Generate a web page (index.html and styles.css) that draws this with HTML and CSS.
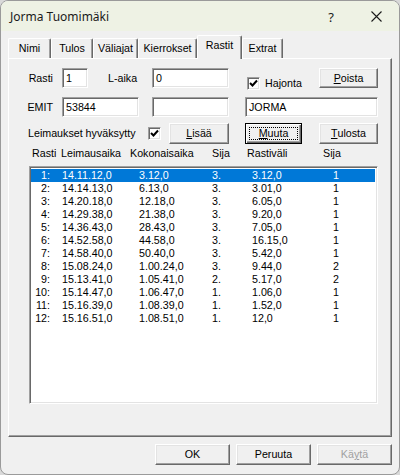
FILE: index.html
```html
<!DOCTYPE html>
<html>
<head>
<meta charset="utf-8">
<link rel="stylesheet" href="styles.css">
</head>
<body>
<div class="window">
  <div class="titlebar">
    <span class="title">Jorma Tuomimäki</span>
    <span class="help">?</span>
    <span class="close"><svg width="11" height="11" viewBox="0 0 11 11"><path d="M0.5 0.5 L10.5 10.5 M10.5 0.5 L0.5 10.5" stroke="#1a1a1a" stroke-width="1.1" fill="none"/></svg></span>
  </div>
  <div class="client">
    <div class="tabs">
      <div class="tab w-nimi">Nimi</div>
      <div class="tab w-tulos">Tulos</div>
      <div class="tab w-vali">Väliajat</div>
      <div class="tab w-kierr">Kierrokset</div>
      <div class="tab active w-rastit">Rastit</div>
      <div class="tab w-extrat">Extrat</div>
    </div>
    <div class="panel">
      <div class="row row1">
        <span class="lbl lbl-right">Rasti</span>
        <span class="input in-rasti">1</span>
        <span class="lbl lbl-laika">L-aika</span>
        <span class="input in-77">0</span>
        <span class="chkgroup">
          <span class="check"><svg width="9" height="9" viewBox="0 0 9 9"><path d="M1 4 L3.5 6.5 L8 1.5" stroke="#000" stroke-width="2" fill="none"/></svg></span>
          <span class="chklbl">Hajonta</span>
        </span>
        <span class="btn btn-59"><u>P</u>oista</span>
      </div>
      <div class="row row2">
        <span class="lbl lbl-right">EMIT</span>
        <span class="input in-emit">53844</span>
        <span class="input in-77 in-second"></span>
        <span class="input in-name">JORMA</span>
      </div>
      <div class="row row3">
        <span class="lbl lbl-leim">Leimaukset hyväksytty</span>
        <span class="check"><svg width="9" height="9" viewBox="0 0 9 9"><path d="M1 4 L3.5 6.5 L8 1.5" stroke="#000" stroke-width="2" fill="none"/></svg></span>
        <span class="btn btn-lisaa"><u>L</u>isää</span>
        <span class="btn btn-default"><span class="focus"><u>M</u>uuta</span></span>
        <span class="btn btn-59 btn-tulosta"><u>T</u>ulosta</span>
      </div>
      <div class="header">
        <span class="h-rasti">Rasti</span>
        <span class="h-leim">Leimausaika</span>
        <span class="h-kok">Kokonaisaika</span>
        <span class="h-sija">Sija</span>
        <span class="h-rv">Rastiväli</span>
        <span class="h-sija2">Sija</span>
      </div>
      <div class="list">
        <div class="lrow sel"><span class="c-n">1:</span><span class="c-l">14.11.12,0</span><span class="c-k">3.12,0</span><span class="c-s">3.</span><span class="c-r">3.12,0</span><span class="c-s2">1</span></div>
        <div class="lrow"><span class="c-n">2:</span><span class="c-l">14.14.13,0</span><span class="c-k">6.13,0</span><span class="c-s">3.</span><span class="c-r">3.01,0</span><span class="c-s2">1</span></div>
        <div class="lrow"><span class="c-n">3:</span><span class="c-l">14.20.18,0</span><span class="c-k">12.18,0</span><span class="c-s">3.</span><span class="c-r">6.05,0</span><span class="c-s2">1</span></div>
        <div class="lrow"><span class="c-n">4:</span><span class="c-l">14.29.38,0</span><span class="c-k">21.38,0</span><span class="c-s">3.</span><span class="c-r">9.20,0</span><span class="c-s2">1</span></div>
        <div class="lrow"><span class="c-n">5:</span><span class="c-l">14.36.43,0</span><span class="c-k">28.43,0</span><span class="c-s">3.</span><span class="c-r">7.05,0</span><span class="c-s2">1</span></div>
        <div class="lrow"><span class="c-n">6:</span><span class="c-l">14.52.58,0</span><span class="c-k">44.58,0</span><span class="c-s">3.</span><span class="c-r">16.15,0</span><span class="c-s2">1</span></div>
        <div class="lrow"><span class="c-n">7:</span><span class="c-l">14.58.40,0</span><span class="c-k">50.40,0</span><span class="c-s">3.</span><span class="c-r">5.42,0</span><span class="c-s2">1</span></div>
        <div class="lrow"><span class="c-n">8:</span><span class="c-l">15.08.24,0</span><span class="c-k">1.00.24,0</span><span class="c-s">3.</span><span class="c-r">9.44,0</span><span class="c-s2">2</span></div>
        <div class="lrow"><span class="c-n">9:</span><span class="c-l">15.13.41,0</span><span class="c-k">1.05.41,0</span><span class="c-s">2.</span><span class="c-r">5.17,0</span><span class="c-s2">2</span></div>
        <div class="lrow"><span class="c-n">10:</span><span class="c-l">15.14.47,0</span><span class="c-k">1.06.47,0</span><span class="c-s">1.</span><span class="c-r">1.06,0</span><span class="c-s2">1</span></div>
        <div class="lrow"><span class="c-n">11:</span><span class="c-l">15.16.39,0</span><span class="c-k">1.08.39,0</span><span class="c-s">1.</span><span class="c-r">1.52,0</span><span class="c-s2">1</span></div>
        <div class="lrow"><span class="c-n">12:</span><span class="c-l">15.16.51,0</span><span class="c-k">1.08.51,0</span><span class="c-s">1.</span><span class="c-r">12,0</span><span class="c-s2">1</span></div>
      </div>
    </div>
    <div class="buttons">
      <span class="btn btn-bottom">OK</span>
      <span class="btn btn-bottom">Peruuta</span>
      <span class="btn btn-bottom disabled">Kä<u>y</u>tä</span>
    </div>
  </div>
</div>
</body>
</html>
```

FILE: styles.css
```css
html, body {
  margin: 0;
  padding: 0;
}
body {
  background: #d9d9d9;
  font-family: "Liberation Sans", Arial, sans-serif;
  font-size: 10.7px;
  color: #000;
}
.window {
  width: 400px;
  height: 475px;
  box-sizing: border-box;
  border: 1px solid #9a9a9a;
  border-radius: 8px;
  background: #f0f0f0;
  overflow: hidden;
  display: flex;
  flex-direction: column;
}
.titlebar {
  height: 30px;
  flex: none;
  background: #eef2e4;
  display: flex;
  align-items: center;
  font-family: "Segoe UI", "Noto Sans", sans-serif;
  font-size: 12px;
  color: #1a1a1a;
}
.title {
  flex: 1;
  padding-left: 9px;
  padding-top: 1px;
}
.help {
  width: 46px;
  text-align: center;
  font-size: 13px;
  padding-top: 1px;
}
.close {
  width: 45px;
  display: flex;
  justify-content: center;
  align-items: center;
  padding-top: 1px;
}
.client {
  flex: 1;
  padding: 0 7px;
  display: flex;
  flex-direction: column;
}
.tabs {
  margin-top: 4px;
  height: 23px;
  display: flex;
  align-items: flex-end;
  position: relative;
  z-index: 2;
}
.tab {
  box-sizing: border-box;
  height: 20px;
  border-top: 1px solid #fff;
  border-left: 1px solid #fff;
  border-right: 1px solid #696969;
  box-shadow: inset -1px 0 #a0a0a0;
  border-radius: 2px 2px 0 0;
  text-align: center;
  padding-top: 3px;
  line-height: 13px;
  background: #f0f0f0;
}
.tab.active {
  height: 24px;
  margin-bottom: -1px;
  padding-top: 3px;
}
.w-nimi { width: 43px; }
.w-tulos { width: 42px; }
.w-vali { width: 45px; }
.w-kierr { width: 59px; }
.w-rastit { width: 45px; }
.w-extrat { width: 41px; }
.panel {
  height: 379px;
  box-sizing: border-box;
  border: 1px solid;
  border-color: #fff #696969 #696969 #fff;
  box-shadow: inset -1px -1px #a0a0a0;
  display: flex;
  flex-direction: column;
  position: relative;
  z-index: 1;
}
.row {
  display: flex;
  align-items: center;
}
.row1 {
  margin-top: 8px;
  height: 22px;
}
.row2 {
  margin-top: 8px;
  height: 20px;
}
.row3 {
  margin-top: 5px;
  height: 22px;
}
.lbl {
  flex: none;
  line-height: 13px;
}
.lbl-right {
  width: 44px;
  text-align: right;
}
.lbl-laika {
  width: 44px;
  margin-left: 20px;
}
.lbl-leim {
  width: 120px;
  padding-left: 19px;
  box-sizing: border-box;
  width: 139px;
}
.input {
  flex: none;
  box-sizing: border-box;
  height: 20px;
  border: 1px solid;
  border-color: #a0a0a0 #fff #fff #a0a0a0;
  box-shadow: inset 1px 1px #696969, inset -1px -1px #e3e3e3;
  background: #fff;
  padding-left: 3px;
  line-height: 18px;
  overflow: hidden;
}
.in-rasti {
  width: 26px;
  margin-left: 9px;
}
.in-77 {
  width: 77px;
}
.in-emit {
  width: 77px;
  margin-left: 9px;
}
.in-second {
  margin-left: 13px;
}
.in-name {
  width: 133px;
  margin-left: 16px;
}
.check {
  flex: none;
  box-sizing: border-box;
  width: 13px;
  height: 13px;
  border: 1px solid;
  border-color: #a0a0a0 #fff #fff #a0a0a0;
  box-shadow: inset 1px 1px #696969, inset -1px -1px #e3e3e3;
  background: #fff;
  display: flex;
  align-items: center;
  justify-content: center;
}
.chkgroup {
  flex: none;
  align-self: flex-end;
  margin-bottom: -1px;
  margin-left: 18px;
  width: 72px;
  display: flex;
  align-items: center;
}
.chklbl {
  margin-left: 5px;
  line-height: 13px;
}
.btn {
  flex: none;
  box-sizing: border-box;
  height: 20px;
  border: 1px solid;
  border-color: #fff #696969 #696969 #fff;
  box-shadow: inset -1px -1px #a0a0a0, inset 1px 1px #e3e3e3;
  background: #f0f0f0;
  display: flex;
  align-items: center;
  justify-content: center;
  line-height: 13px;
}
.btn-59 {
  width: 59px;
}
.row3 .btn {
  height: 21px;
}
.btn-lisaa {
  width: 60px;
  margin-left: 8px;
}
.btn-default {
  width: 57px;
  margin-left: 16px;
  border: 1px solid #000;
  box-shadow: inset 1px 1px #fff, inset -1px -1px #696969, inset -2px -2px #a0a0a0;
  padding: 3px;
}
.focus {
  flex: 1;
  align-self: stretch;
  border: 1px dotted #000;
  display: flex;
  align-items: center;
  justify-content: center;
}
.btn-tulosta {
  margin-left: 17px;
}
.header {
  margin-top: 2px;
  height: 14px;
  line-height: 14px;
  display: flex;
  padding-left: 23px;
}
.header span {
  flex: none;
}
.h-rasti { width: 29px; }
.h-leim { width: 69px; }
.h-kok { width: 82px; }
.h-sija { width: 35px; }
.h-rv { width: 76px; }
.list {
  margin-top: 6px;
  margin-left: 20px;
  width: 349px;
  height: 238px;
  box-sizing: border-box;
  border: 1px solid;
  border-color: #a0a0a0 #fff #fff #a0a0a0;
  box-shadow: inset 1px 1px #696969, inset -1px -1px #e3e3e3;
  background: #fff;
  padding: 2px 2px 0 1px;
}
.lrow {
  height: 13px;
  line-height: 13px;
  display: flex;
}
.lrow span {
  flex: none;
}
.lrow.sel {
  background: #0078d7;
  color: #fff;
}
.c-n {
  width: 19px;
  text-align: right;
}
.c-l {
  width: 77px;
  margin-left: 12px;
}
.c-k { width: 73px; }
.c-s { width: 40px; }
.c-r { width: 81px; }
.buttons {
  margin-top: 7px;
  display: flex;
  justify-content: flex-end;
  gap: 6px;
}
.btn-bottom {
  width: 75px;
  height: 21px;
}
.disabled {
  color: #a0a0a0;
}
```
